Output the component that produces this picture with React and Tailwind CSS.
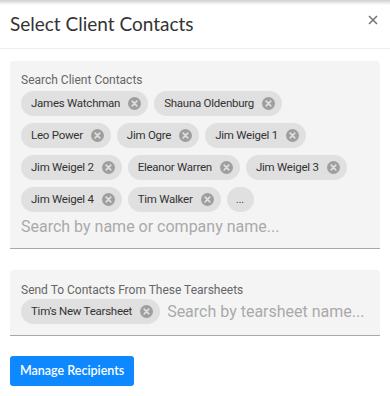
const contacts = [
  "James Watchman",
  "Shauna Oldenburg",
  "Leo Power",
  "Jim Ogre",
  "Jim Weigel 1",
  "Jim Weigel 2",
  "Eleanor Warren",
  "Jim Weigel 3",
  "Jim Weigel 4",
  "Tim Walker",
];

function CancelIcon() {
  return (
    <svg width="13" height="13" viewBox="0 0 24 24" className="shrink-0">
      <circle cx="12" cy="12" r="12" fill="#9e9e9e" />
      <path
        d="M7.8 7.8 L16.2 16.2 M16.2 7.8 L7.8 16.2"
        stroke="#e0e0e0"
        strokeWidth="3.2"
        strokeLinecap="round"
      />
    </svg>
  );
}

function Chip({ label }) {
  return (
    <div className="h-[25px] flex items-center gap-[8px] pl-[10px] pr-[7px] rounded-full bg-[#e0e0e0] text-[11.5px] tracking-[-0.25px] text-[#333] whitespace-nowrap font-['Roboto',sans-serif]">
      <span>{label}</span>
      <CancelIcon />
    </div>
  );
}

export default function App() {
  return (
    <div className="w-[390px] h-[396px] bg-white overflow-hidden font-['Roboto',sans-serif]">
      <div className="h-[5px] bg-gradient-to-b from-[#cfcfcf] to-white" />

      {/* Header */}
      <div className="h-[44px] flex items-center justify-between px-[10px] border-b border-[#eeeeee]">
        <h2 className="text-[19px] text-[#333] font-['Lato',sans-serif] -mt-[5px]">
          Select Client Contacts
        </h2>
        <svg width="10" height="10" viewBox="0 0 10 10" className="mr-[2px] -mt-[14px]">
          <path d="M1 1 L9 9 M9 1 L1 9" stroke="#777" strokeWidth="1.6" />
        </svg>
      </div>

      <div className="px-[10px] pt-[12px]">
        {/* Client contacts */}
        <div className="bg-[#f4f4f4] rounded-t-[4px] border-b border-[#a8a8a8] pl-[11px] pr-[11px] pt-[11px] pb-[9px]">
          <div className="text-[12px] leading-[16px] text-[#666]">Search Client Contacts</div>
          <div className="flex flex-wrap gap-x-[6px] gap-y-[7px] mt-[3px]">
            {contacts.map((c) => (
              <Chip key={c} label={c} />
            ))}
            <div className="h-[25px] w-[27px] flex items-center justify-center rounded-full bg-[#e0e0e0] text-[10px] text-[#333]">
              ...
            </div>
          </div>
          <div className="mt-[3px] text-[16px] leading-[24px] text-[#aaaaaa]">
            Search by name or company name...
          </div>
        </div>

        {/* Tearsheets */}
        <div className="mt-[21px] bg-[#f4f4f4] rounded-t-[4px] border-b border-[#a8a8a8] px-[11px] pt-[12px] pb-[11px]">
          <div className="text-[12px] leading-[16px] text-[#666]">
            Send To Contacts From These Tearsheets
          </div>
          <div className="flex items-center gap-[7px] mt-[1px]">
            <Chip label="Tim's New Tearsheet" />
            <span className="text-[16px] text-[#aaaaaa] whitespace-nowrap">
              Search by tearsheet name...
            </span>
          </div>
        </div>

        <button className="mt-[20px] h-[30px] px-[10px] rounded-[3px] bg-[#0d88ff] text-white text-[12.5px] font-semibold font-['Lato',sans-serif]">
          Manage Recipients
        </button>
      </div>
    </div>
  );
}
